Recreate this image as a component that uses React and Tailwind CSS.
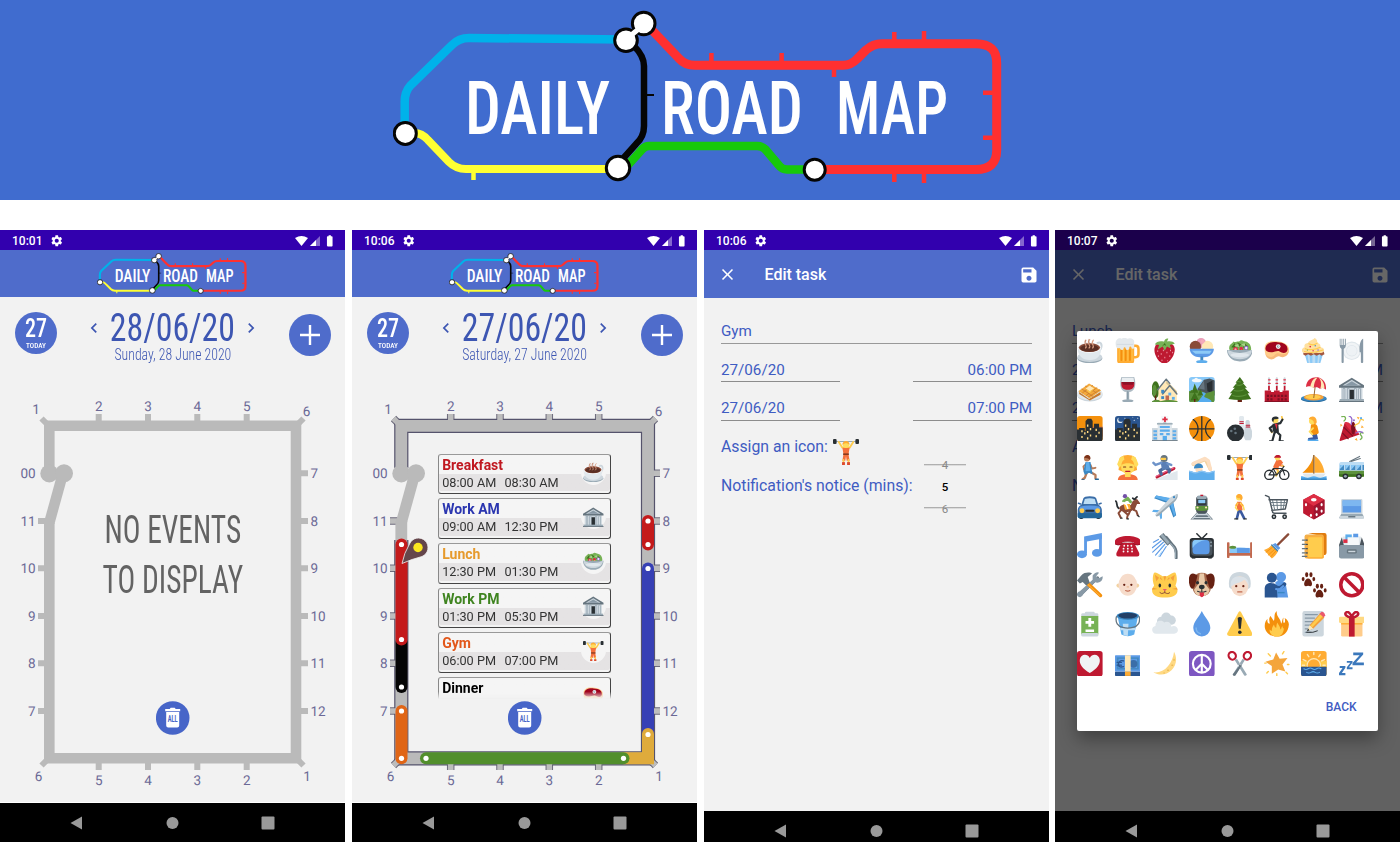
import React, { Fragment } from "react";
import { MdSettings, MdSave, MdClose, MdChevronLeft, MdChevronRight, MdBatteryFull } from "react-icons/md";

/* ---------- drawing helpers (36 x 36 icon box) ---------- */
const g = (...kids) => React.createElement(Fragment, null, ...kids);
const p = (fill, d) => <path fill={fill} d={d} />;
const l = (stroke, width, d) => (
  <path fill="none" stroke={stroke} strokeWidth={width} strokeLinecap="round" strokeLinejoin="round" d={d} />
);
const c = (fill, cx, cy, r) => <circle fill={fill} cx={cx} cy={cy} r={r} />;
const e = (fill, cx, cy, rx, ry) => <ellipse fill={fill} cx={cx} cy={cy} rx={rx} ry={ry} />;
const r = (fill, x, y, width, height, rx = 0) => (
  <rect fill={fill} x={x} y={y} width={width} height={height} rx={rx} />
);

const windows = g(
  p("#ffd983", "M6 20h2v3H6zM10 23h2v3h-2zM6 28h2v3H6zM14 12h2v3h-2zM18 17h2v3h-2zM14 21h2v3h-2zM18 26h2v3h-2zM14 30h2v3h-2zM26 18h2v3h-2zM30 22h2v3h-2zM26 27h2v3h-2z")
);
const skyline = p(
  "#292f33",
  "M0 19h3v-2h8v4h1V7l3-3h5l2 3v10h2v-6h7v5h5v16a4 4 0 0 1-4 4H4a4 4 0 0 1-4-4z"
);

const icons = {
  coffee: g(
    e("#99aab5", 18, 28.5, 17.5, 7), e("#ccd6dd", 18, 27, 17.5, 6.8),
    l("#ccd6dd", 3, "M29 7c6-3 8 6 1 12"),
    p("#e1e8ed", "M1 14c0 10 6 17 17 17s16-7 16-17z"),
    e("#f5f8fa", 17.5, 13.5, 16.5, 7.5), e("#8a4b38", 17.5, 13.5, 15, 6.2), e("#5a2f24", 17.5, 14.5, 13, 5),
    l("#d99e82", 1.7, "M12 14c4-4-4-5 0-11M17 14c4-4-4-5 0-12M22 14c4-4-4-5 1-11"),
    l("#8a4b38", 0.6, "M13 12c4-4-4-5 0-9M18 12c4-4-4-5 0-10")
  ),
  beer: g(
    l("#ffac33", 3.6, "M25 11h4q4 0 4 4v8q0 4-4 4h-4"),
    p("#ffac33", "M3 10h24v22a4 4 0 0 1-4 4H7a4 4 0 0 1-4-4z"),
    l("#f4900c", 2.4, "M9 17v14M15 17v14M21 17v14"), l("#ffcc4d", 1, "M6 15v17M12 15v17M18 15v17M24 15v17"),
    p("#e4e9ed", "M1 9C0 3 5-1 9 1c4-2 7-1 8 0 5-2 10 0 10 4v8c0 3-4 3-4 0-1-2-3-1-3 1 0 4-5 4-5 0-1-2-3-1-3 1-1 3-5 2-5-1-2 1-6 1-6-5z"),
    l("#ccd6dd", 1, "M3 9h22")
  ),
  strawberry: g(
    p("#be1931", "M4 13C6 6 13 6 18 8c6-3 14 0 14 8 0 9-8 20-15 20S1 22 4 13z"),
    p("#77b255", "M17 5c1-4 4-5 6-4l-2 4c5-1 9 0 11 3l-7 2 2 5-6-3-3 6-3-6-7 4 2-6-6-1c2-4 7-5 12-4z"),
    p("#3e721d", "M18 7l2 4-3-1-3 2z"),
    l("#f4abba", 1.2, "M8 18v1M13 22v1M9 25v1M16 17v1M21 20v1M26 17v1M18 27v1M25 25v1M14 31v1M22 32v0M29 20v1")
  ),
  iceCream: g(
    c("#ea9eb9", 17, 7, 7), c("#8a4b38", 9, 12, 8), c("#ffe8b6", 26, 12, 8), c("#f4abba", 19, 5, 3),
    p("#5c9ae6", "M1 15h34c0 7-7 12-14 12h-6C8 27 1 22 1 15z"), p("#8ccaf7", "M4 18h28l-3 4H9z"),
    r("#4289c1", 16, 26, 4, 6), e("#5dadec", 18, 33.5, 8, 2.5)
  ),
  salad: g(
    p("#77b255", "M3 15C3 8 7 9 9 5c3 2 5-1 8 0 4-4 6 0 9 0 5 1 8 5 8 11l-2 4H5z"),
    p("#3e721d", "M6 13l5-6 1 7zM15 6l5 3-5 5zM24 7l6 5-7 2z"), p("#a6d388", "M10 11l6-3 1 5zM20 9l5-2 1 6z"),
    c("#dd2e44", 12, 16, 3.4), c("#f4abba", 12, 16, 1.6), c("#9266cc", 27, 14, 3), c("#eef", 27, 14, 1.7),
    c("#dd2e44", 20, 15, 2.6), p("#ffcc4d", "M17 19l4-3 2 4z"),
    p("#99aab5", "M0 17h36c0 8-6 16-18 16S0 25 0 17z"), p("#ccd6dd", "M1 17q17 8 34 0c0 7-6 13-17 13S1 24 1 17z"),
    e("#e1e8ed", 18, 24, 13, 3)
  ),
  meat: g(
    p("#ffcc8a", "M1 16C0 6 9 3 20 5c10 1 16 6 15 13-1 6-8 8-13 5-4-2-6 6-12 5C3 28 1 22 1 16z"),
    p("#f7b97b", "M2 21c2 6 9 8 13 3s7-1 11-1 8-2 9-6c0 8-7 12-13 9-4-2-7 5-13 4C5 29 2 26 2 21z"),
    p("#a0041e", "M2 15C3 7 10 5 19 6c10 0 15 5 14 11-1 5-7 5-11 2-4-2-8 2-12 1-5 0-8-2-8-5z"),
    c("#f5f8fa", 20, 12, 3.3), c("#8899a6", 20, 12, 1.8), c("#f5f8fa", 20.5, 11.5, 0.8)
  ),
  cupcake: g(
    p("#8ccaf7", "M5 22h26l-4 14H9z"), p("#bdddf4", "M9 23h3l1 13h-2zM16 23h4v13h-4zM24 23h3l-2 13h-2z"),
    p("#a5583f", "M4 19h28l1 4-4 2-3-2-4 2-4-2-4 2-4-2-4 2-3-2z"),
    p("#ffe0a0", "M2 20c-2-5 1-6 3-7-1-5 3-6 5-6 1-4 6-3 9-7 6 3 3 7 3 7 5 0 6 4 5 6 5 0 7 4 4 7-5 3-9-1-14 2-5-3-10 1-15-2z"),
    l("#ffcc4d", 1.5, "M6 15c5 2 14 2 21-2M11 8c4 2 9 2 12-1M5 19c7 2 18 1 26-2"),
    c("#dd2e44", 13, 12, 1.2), c("#3b88c3", 20, 11, 1), c("#77b255", 9, 17, 1), c("#9266cc", 24, 17, 1.1), c("#dd2e44", 17, 18, 1)
  ),
  plate: g(
    c("#dfe6eb", 18, 18, 13), c("#f1f4f6", 18, 18, 11.4), c("#dfe6eb", 18, 18, 8), c("#eef2f5", 18, 18, 7),
    p("#8899a6", "M1 1h1.2v9h1.3V1h1.2v9H6V1h1.2v9h1.2V1h1.2v10q0 3-3 4.5V34q-1.5 3-3 0V15.500Q1 14 1 11z"),
    p("#8899a6", "M34 1v33q-1.600 3-3.200 0V20H29C28 8 31 2 34 1z")
  ),
  waffle: g(
    e("#ccd6dd", 18, 25, 18, 9.500), e("#e1e8ed", 18, 23.500, 18, 9), p("#c77b2e", "M3 21l14 10 16-10v4L18 33 3 24z"),
    p("#f4a93c", "M2 20L17 9l17 10-16 11z"),
    l("#c77b2e", 1.100, "M7 17l15 10M12 13l15 9M28 15L13 26M22 12L8 22M32 18L16 28"), p("#ffe8b6", "M12 16l6-4 6 4-6 4z"), p("#ffcc4d", "M12 17l6 3 6-3-6 6z")
  ),
  wine: g(
    p("#aebbc4", "M9 0h18c4 12 0 21-7 21v11h-4V21C9 21 5 12 9 0z"), p("#e9eef1", "M10 1h16l1 7H9z"),
    p("#be1931", "M9 7h18c1 7-2 11-9 11S8 14 9 7z"), p("#8c1128", "M9 7h18l-2 4H12z"),
    r("#8899a6", 17, 20, 2, 12), e("#99aab5", 18, 33.500, 8, 2.300)
  ),
  house: g(
    e("#3e721d", 5, 18, 5.500, 12), p("#662113", "M4 20h2v14H4z"), e("#5c913b", 3.500, 19, 3, 8),
    p("#ffe8b6", "M9 17L20 5l6 6 9 9v15H9z"), p("#d8c494", "M20 5l15 15v3L20 9z"),
    l("#66757f", 2, "M8 18L20 3l5 6M15 24l10-12 10 12"), r("#3b88c3", 13, 18, 4, 5), r("#5dadec", 23, 22, 4, 4), r("#5dadec", 28, 28, 4, 4),
    r("#3b88c3", 13, 27, 4, 4), r("#c1694f", 19, 26, 5, 9), p("#5c913b", "M0 34q7-4 12 0 12-3 24 0v2H0z")
  ),
  park: g(
    r("#88c9f9", 0, 0, 36, 36, 4), e("#f5f8fa", 11, 5, 7, 2.500), c("#f5f8fa", 10, 3.500, 2.500),
    p("#4b555d", "M12 17L21 4l8-2 7 3v21H12z"), p("#292f33", "M25 9l8-4v18l-7-3z"), p("#66757f", "M14 16l7-11 1 13z"),
    p("#5c913b", "M0 20q12-5 24 3l12-4v13a4 4 0 0 1-4 4H4a4 4 0 0 1-4-4z"),
    p("#55acee", "M17 21c14 1 0 6 6 8 6 2 9 4 9 7H10c6-3 5-6 8-8 2-3-8-4-1-7z"),
    p("#3e721d", "M4 22l4-13 5 13H1l3-4zM12 26l4-9 4 9zM2 33l6-12 6 12z"), r("#662113", 7, 31, 2, 4)
  ),
  tree: g(
    r("#662113", 15, 29, 6, 7, 1), p("#3e721d", "M18 0l6 8h-2l6 7h-3l7 8h-3l5 8q-16 3-32 0l5-8H4l7-8H8l6-7h-2z"),
    l("#5c913b", 1.500, "M13 11q6 2 9-1M10 19q8 2 13-1M8 26q10 3 19-1M14 6l5 1")
  ),
  factory: g(
    p("#be1931", "M1 36V19h9v2h4v-2h8v2h4v-2h9v17z"), r("#7c1022", 1, 34, 34, 2),
    p("#7c1022", "M4 25h3v3H4zM9 25h3v3H9zM14 25h3v3h-3zM19 25h3v3h-3zM24 25h3v3h-3zM29 25h3v3h-3zM4 30h3v3H4zM9 30h3v3H9zM19 30h3v3h-3zM24 30h3v3h-3zM29 30h3v3h-3z"),
    l("#be1931", 2.500, "M7 18v-5M18 18v-5M29 18v-5"), l("#ccd6dd", 3, "M7 11V2M18 11V2M29 11V2"), l("#dd2e44", 2, "M6.500 9h2M17 9h2M28 9h2M6.500 4h2M17 4h2M28 4h2")
  ),
  beach: g(
    e("#269", 18, 31, 18, 4.500), e("#3b88c3", 18, 30, 18, 4.500), e("#f4a03c", 18, 28.500, 14, 4.500), e("#ffcc4d", 17, 28, 11, 3),
    l("#99672e", 1.400, "M21 5l-3 24"), p("#dd2e44", "M7 14C8 2 18-1 26 1c7 3 10 9 9 17-3-3-6-3-8-1-3-3-6-3-9-2-3-2-8-3-11-1z"),
    p("#ffe8b6", "M21 1c-5 2-7 8-8 13l5 1c0-5 2-11 5-14zM25 1c4 4 4 10 2 16 2-2 4-2 6-1 0-7-3-13-8-15z")
  ),
  bank: g(
    r("#ccd6dd", 3, 10, 30, 22), p("#66757f", "M0 12L18 1l18 11v3H0z"), p("#ccd6dd", "M5 12l13-8 13 8z"),
    p("#8899a6", "M8 12l10-6 10 6z"), l("#8899a6", 3.400, "M7 17v14M13 17v14M23 17v14M29 17v14"), l("#e1e8ed", 1.500, "M7 17v14M13 17v14M23 17v14M29 17v14"),
    r("#292f33", 15, 18, 6, 14), r("#99aab5", 1, 31, 34, 2.500), r("#66757f", 0, 33.500, 36, 2.500)
  ),
  sunsetCity: g(r("#f4900c", 0, 0, 36, 36, 4), p("#c1694f", "M22 15h14v14H22z"), skyline, windows),
  nightCity: g(
    r("#2a5590", 0, 0, 36, 36, 4), c("#e1e8ed", 7, 6, 4), c("#2a5590", 8.500, 4.500, 3.700),
    p("#e1e8ed", "M14 2l1 2-2 0zM27 5l1 2-2 0zM32 2l1 2-2 0zM25 1l1 1-2 0z"), skyline, windows
  ),
  hospital: g(
    r("#ccd6dd", 0, 17, 11, 18), r("#ccd6dd", 25, 17, 11, 18), r("#e1e8ed", 8, 9, 20, 26), r("#66757f", 16, 9, 4, 2), r("#f5f8fa", 13, 0, 10, 9),
    p("#dd2e44", "M17 1h2.500v2.500H22V6h-2.500v2.500H17V6h-2.500V3.500H17z"), r("#99aab5", 7, 10, 22, 2),
    p("#5dadec", "M11 14h14v3H11zM11 19h14v3H11zM11 24h5v3h-5zM20 24h5v3h-5zM2 20h5v3H2zM2 25h5v3H2zM2 30h5v3H2zM29 20h5v3h-5zM29 25h5v3h-5zM29 30h5v3h-5z"),
    r("#55acee", 15, 28, 6, 8), r("#66757f", 0, 34, 36, 2)
  ),
  basketball: g(c("#f4900c", 18, 18, 18), l("#292f33", 1.800, "M18 1v34M1 18h34M6 5c9 7 9 19 0 26M30 5c-9 7-9 19 0 26")),
  bowling: g(
    p("#e1e8ed", "M17 2c0-3 7-3 7 0 0 5-1 7 1 12 2 7 0 12-1 12h-6c-2-5-3-8-1-13 1-5 0-7 0-11z"), l("#be1931", 1.500, "M18 8h5M18 10.500h5"),
    p("#ccd6dd", "M26 8c0-3 6-3 6 0 0 4 0 6 2 10 3 6 1 13-1 16h-7c-3-4-3-10-1-15 1-5 1-7 1-11z"), l("#be1931", 1.500, "M27 13h5M27 15.500h5"),
    c("#292f33", 12, 24, 12), c("#66757f", 6, 21, 1.800), c("#66757f", 11, 18, 1.800), c("#66757f", 12, 24, 1.800)
  ),
  dancer: g(
    l("#ffcc4d", 2.500, "M26 5l-1-4M9 19l2 4"), l("#292f33", 3, "M15 12l8-2 3-5M14 13l-6 4 3 5"), p("#292f33", "M12 11h8l1 11-6 3-3-5z"),
    p("#dd2e44", "M15 11l3 8 1-8z"), l("#292f33", 3, "M15 23l-3 11M18 22l5 5-1 8"), l("#292f33", 2, "M11 35H8M23 35h4"),
    c("#ffdc5d", 16, 6, 4.200), p("#292f33", "M11 6c-1-5 6-7 10-3-3 2-6 1-7 2l-1 4z")
  ),
  kneeling: g(
    p("#3b5aa0", "M14 24h8l2 8c-5 3-10 3-14 2v-3l7-1z"), p("#55acee", "M9 33h12c4-1 5 3 1 3H10z"),
    p("#f4900c", "M14 12c4-2 7-1 9 2l2 9c0 4-9 5-12 1z"), l("#ffdc5d", 2.500, "M17 17l-5 5 4 4"), c("#ffdc5d", 16, 7, 4.800), p("#ffac33", "M11 4c3-6 12-4 11 5-1 3-4 3-4 0 0-3-4-4-7-5z")
  ),
  party: g(
    p("#be1931", "M8 9L29 26 2 35q-2 0-1-2z"), p("#dd2e44", "M8 9c6-2 9 4 14 7l7 10c-7-1-18-8-21-17z"), l("#7c1022", 1.500, "M7 16l12 12M5 24l8 8"), e("#7c1022", 20, 17, 3, 9),
    l("#77b255", 1.800, "M4 1c5-2 7 3 3 6M30 33c4-2 2-5 0-7 0-3 2-3 4-2"), l("#9266cc", 1.800, "M14 0c6 2 4 7 3 12M24 24c4-3 7-2 9-1"), l("#ffcc4d", 1.800, "M22 14c2-4 6-1 7-6s4-3 6-2"),
    p("#ffac33", "M25 1l4 1-2 3zM32 13l3 3-4 1zM2 11l3 2-3 2zM22 33l3-2 1 4z"), c("#55acee", 31, 3, 1.500), c("#9266cc", 21, 6, 1.400)
  ),
  running: g(
    l("#b77b59", 2.600, "M14 12l-5 4 1 5M19 14l2 5 5-1"), l("#b77b59", 3.200, "M14 24l-3 8-3 2M19 24l7 4v5"), p("#3b88c3", "M12 10h7l2 12 1 5-5-2-6 3-2-5z"),
    p("#5dadec", "M13 10h4l2 12-7 1z"), c("#b77b59", 14, 5, 4.200), p("#7c331a", "M10 4c2-6 9-5 9 1l-1 2c-2-3-5-2-8-3z"), l("#269", 2, "M7 35h3M26 34h4")
  ),
  massage: g(
    p("#ffac33", "M6 12C4 4 10 0 18 0s14 4 12 12l1 9q-13 7-26 0z"), p("#f4703c", "M4 36c0-7 5-9 14-9s14 2 14 9z"), r("#ffdc5d", 14, 24, 8, 7),
    e("#ffdc5d", 18, 17, 9.500, 10), p("#ffdc5d", "M7 3l5-2 2 9-8 8-3-5zM29 3l-5-2-2 9 8 8 3-5z"), p("#ffac33", "M9 14c1-7 4-8 9-8s8 1 9 8c-4-3-14-3-18 0z"),
    l("#7c331a", 1.500, "M12 17h3M21 17h3"), l("#be1931", 1.600, "M15 23h6")
  ),
  snowboard: g(
    p("#e1e8ed", "M0 36L36 22v12q0 2-2 2z"), l("#be1931", 4, "M7 31L31 19"), l("#ea6490", 1.500, "M6 30L31 18"), l("#4b6a9b", 4.500, "M18 18l-7 4 2 5M19 18l6 3-1 3"),
    p("#5b7fb5", "M12 9l10 1 3 9-11 2z"), l("#6d93c9", 3.500, "M13 11l-8 3-3-3M22 12l5 2"), c("#66757f", 17, 5, 5), r("#ffcc4d", 12, 4, 8, 3, 1.500)
  ),
  swimming: g(
    l("#f3d2a2", 5, "M6 13L23 6l7 14"), l("#fcdec1", 5, "M6 12l16-7 5 3 3 12"), c("#fcdec1", 14, 20, 5), p("#3b88c3", "M7 19c0-8 12-10 13-1z"),
    p("#5dadec", "M0 22c4 0 5 2 9 2s5-2 9-2 5 2 9 2 5-2 9-2v13q0 1-2 1H2q-2 0-2-2z"), p("#8cc4f2", "M0 22c4 0 5 2 9 2s5-2 9-2 5 2 9 2 5-2 9-2v2c-4 0-5 2-9 2s-5-2-9-2-5 2-9 2-5-2-9-2z")
  ),
  weights: g(
    l("#99aab5", 1.500, "M4 3.500h28"), r("#292f33", 0, 0, 5, 7, 1.500), r("#292f33", 31, 0, 5, 7, 1.500), l("#ffcc4d", 2.600, "M8 4l5 8 10 0 5-8"),
    p("#f4703c", "M13 12h10l-1.500 9 1.500 9h-4l-1-6-1 6h-4l1.500-9z"), r("#7c331a", 14, 20, 8, 2), l("#ffcc4d", 2.600, "M14.500 29v2M21.500 29v2"), r("#dd4a2b", 12.500, 32, 4, 4), r("#dd4a2b", 19.500, 32, 4, 4), c("#ffdc5d", 18, 8, 4.500), p("#ffac33", "M13 8c0-7 10-7 10 0-3-3-7-3-10 0z")
  ),
  cycling: g(
    l("#ffcc4d", 3, "M17 18l3 5-3 6"), p("#f4703c", "M13 16L18 6l6 1 3 4-6 5-1 5-6-1z"), l("#f4703c", 3, "M22 9l-1 5 5 1"), c("#ffdc5d", 19, 4, 3.700), p("#be1931", "M14 4c2-6 10-5 10 0z"), l("#ffcc4d", 2, "M25 15l3 1"),
    <circle cx="7.500" cy="28" r="6.500" fill="none" stroke="#292f33" strokeWidth="2" />, <circle cx="28.500" cy="28" r="6.500" fill="none" stroke="#292f33" strokeWidth="2" />, l("#292f33", 1.600, "M7 28l6-9h13l3 9M13 19l5 9 8-9 2-3M7 28h11")
  ),
  sailboat: g(p("#f4900c", "M17 1v24H2C10 18 16 10 17 1z"), p("#ffac33", "M19 1c8 5 13 15 14 24H19z"), r("#99672e", 17, 0, 2, 27), p("#e1e8ed", "M2 26h33l-5 6H6z"), p("#55acee", "M0 30c5 0 6 2 9 2s6-2 9-2 6 2 9 2 6-2 9-2v6H0z"), p("#3b88c3", "M0 33h36v3H0z")),
  trolleybus: g(l("#66757f", 1.500, "M15 9l14-7M17 9l13-4"), p("#bdddf4", "M3 10h31q2 0 2 2v15H0V15q0-5 3-5z"), p("#4289c1", "M2 14h5v7H1zM9 14h6v7H9zM17 14h6v7h-6zM25 14h6v7h-6zM33 14h3v7h-3z"), p("#8ccaf7", "M2 14h5l-6 6zM9 14h6l-6 7zM17 14h6l-6 7zM25 14h6l-6 7z"), p("#5c913b", "M0 22h36v6q0 3-3 3H3q-3 0-3-3z"), r("#3e721d", 0, 27, 36, 3), c("#292f33", 9, 30, 4), c("#99aab5", 9, 30, 2), c("#292f33", 28, 30, 4), c("#99aab5", 28, 30, 2)),
  car: g(r("#292f33", 3, 29, 6, 6, 2), r("#292f33", 27, 29, 6, 6, 2), p("#3b6ea8", "M6 15l3-9q1-3 9-3t9 3l3 9q5 3 5 8v9H1v-9q0-5 5-8z"), p("#bdddf4", "M9 14l2-7q7-2 14 0l2 7z"), p("#5c9ae6", "M4 18q14-4 28 0l1 4H3z"), p("#269", "M1 27h34v5q0 2-2 2H3q-2 0-2-2z"), c("#ffcc4d", 7, 23.500, 3.500), c("#ffcc4d", 29, 23.500, 3.500), r("#292f33", 12, 22, 12, 3, 1), l("#3b6ea8", 2, "M2 13l3 1M34 13l-3 1")),
  horseRacing: g(
    l("#292f33", 2.500, "M5 20c-4-3-1-8-4-10M30 9l-5-3M27 8l4-4"), l("#8a4b38", 2.800, "M9 22l-4 5 3 6M12 24l6 5-1 5M24 21l6 3 2 6M22 22l-3 7"), e("#8a4b38", 16, 20, 10, 5.500), p("#8a4b38", "M20 20l5-10 6-3 5 7-5 0-4 10z"), l("#292f33", 1.600, "M8 34h2M17 35h2M32 30l2 2"),
    p("#ffac33", "M12 14h9l1 7-8 1z"), l("#77b255", 4, "M12 10l6-4 4 5"), c("#7450a8", 14, 3, 3), l("#fff", 2.200, "M11 12l5 3 2 5")
  ),
  airplane: g(
    p("#3b88c3", "M22 13L3 6l3-4 22 5zM23 14l7 19 4-3-5-22z"), p("#5dadec", "M23 11L4 5l2-3 22 4zM25 13l6 18 2-2-4-20zM8 26l-8-1 2-3 10 1zM10 28l2 8 2-2 0-10z"),
    p("#99aab5", "M36 1c1 5-4 10-8 13L9 31q-4 2-4-2l18-19C27 5 31 1 36 0z"), p("#ccd6dd", "M35 1c-5 0-9 3-12 7L6 27q-1 2 0 3L28 11c4-3 7-6 7-10z"), c("#3b88c3", 31, 4.500, 1.600)
  ),
  station: g(
    p("#66757f", "M11 26h14l9 10H2z"), l("#ccd6dd", 1.600, "M12 27L5 35M24 27l7 8M11 29h14M8 33h20"), r("#4b555d", 10, 3, 16, 24, 4), r("#99aab5", 11, 2, 14, 6, 3), r("#292f33", 12, 7, 12, 8, 1), r("#8ccaf7", 13, 8, 10, 5),
    p("#5c913b", "M9 17h18v5q-9 4-18 0z"), c("#ffe8b6", 12, 19, 1.500), c("#ffe8b6", 24, 19, 1.500), r("#be1931", 16, 1, 4, 2)
  ),
  walking: g(l("#3b5aa0", 3.600, "M17 22l-3 12M18 22l3 6 3 6"), p("#f4703c", "M14 11h6l2 12h-8z"), l("#ffdc5d", 2.200, "M15 13l-3 6 3 4M19 13l4 5 1 4"), p("#ffac33", "M15 11l-4 5 3 1zM19 11l5 5-3 1z"), c("#ffdc5d", 17, 5, 4.300), p("#ffac33", "M13 3c2-5 9-4 9 3l-2 4-2-4c-3 0-5-1-5-3z"), l("#292f33", 2, "M11 35h4M24 35h3")),
  cart: g(l("#4b555d", 2, "M2 2l5 2 5 21q0 2 3 2h16M7 8h26l-3 13-19 2"), l("#66757f", 1.300, "M9 12h23M10 16h21M12 9l3 13M18 9l1 13M24 9v12M29 9l-2 12"), c("#292f33", 14, 32, 3.400), c("#ccd6dd", 14, 32, 1.300), c("#292f33", 29, 32, 3.400), c("#ccd6dd", 29, 32, 1.300)),
  die: g(p("#be1931", "M18 0l15 8v19l-15 9-15-9V8z"), p("#dd2e44", "M18 0l15 8-15 9L3 8z"), p("#a0152f", "M18 17l15-9v19l-15 9z"), e("#fff", 18, 8, 4, 2.500), e("#fff", 7, 15, 1.500, 2.200), e("#fff", 14, 30, 1.500, 2.200), e("#fff", 22, 29, 1.500, 2.200), e("#fff", 29, 24, 1.500, 2.200), e("#fff", 22, 21, 1.500, 2.200), e("#fff", 29, 15, 1.500, 2.200)),
  laptop: g(r("#ccd6dd", 3, 7, 30, 22, 2), r("#5c9ae6", 5, 9, 26, 17), r("#7db7f0", 5, 9, 26, 8), p("#99aab5", "M3 28h30l3 6H0z"), p("#ccd6dd", "M1 31h34v3q0 1-2 1H3q-2 0-2-1z"), r("#66757f", 13, 31, 10, 2)),
  music: g(p("#5c9ae6", "M10 5L35 0v8L14 12v17h-4z"), p("#5c9ae6", "M31 3h4v25h-4z"), e("#5c9ae6", 7, 30, 7, 5.500), e("#5c9ae6", 28, 28, 7, 5.500)),
  phone: g(p("#be1931", "M9 14h18l7 14q1 5-3 5H5q-4 0-3-5z"), p("#be1931", "M0 11C2 2 34 2 36 11v4q0 2-3 2h-4q-3 0-3-4-8-2-16 0 0 4-3 4H3q-3 0-3-2z"), l("#8c1128", 1, "M1 16q3 2 8 0 1-3 3-3 6-1 12 0 2 0 3 3 5 2 8 0"), l("#f5f8fa", 2.600, "M13 18h0M18 18h0M23 18h0M12 22h0M18 22h0M24 22h0M12 26h0M18 26h0M24 26h0")),
  shower: g(l("#66757f", 4, "M20 6l10 12q4 4 4 10v7"), l("#99aab5", 1.500, "M19 6l10 12q4 4 4 10v7"), p("#66757f", "M10 5l6-5 11 13-5 5z"), p("#99aab5", "M12 4l3-3 10 12-3 3z"), l("#5c9ae6", 1.600, "M13 11L0 21M16 13L1 27M18 16L5 31M20 19L11 33M9 9L2 13"), l("#88c9f9", 1, "M15 18l-3 4M14 26l-5 7")),
  tv: g(l("#292f33", 2, "M11 1l7 7 7-7"), r("#292f33", 1, 7, 34, 28, 4), r("#4b555d", 3, 9, 30, 23, 5), r("#5c9ae6", 5, 10, 24, 20, 5), p("#88c9f9", "M9 10h14q-12 2-18 11v-6q0-5 4-5z"), c("#99aab5", 31, 13, 1.200), c("#99aab5", 31, 18, 1.200), r("#292f33", 4, 34, 5, 2), r("#292f33", 27, 34, 5, 2)),
  bed: g(r("#c1694f", 0, 13, 3.500, 22, 1), r("#c1694f", 32.500, 13, 3.500, 22, 1), r("#c1694f", 2, 28, 32, 4), p("#88c9f9", "M4 22q14-3 28 0v6H4z"), r("#5c9ae6", 14, 21, 18, 7), e("#5c913b", 8, 20, 5, 2.200)),
  broom: g(l("#8a4b38", 3.200, "M34 2L18 18"), p("#5c9ae6", "M16 14l7 7-3 3-8-8z"), p("#ffac33", "M11 16l9 9c-2 5-6 9-9 11L0 24c5-2 8-4 11-8z"), l("#f4900c", 1.300, "M12 20L3 27M15 23L6 31M17 25l-7 8"), l("#3b88c3", 2, "M11 17l8 8")),
  notebook: g(p("#e07c0f", "M10 0h23q3 0 3 3v24q0 4-4 4l-1-26z"), r("#f4b04a", 5, 2, 27, 34, 3), r("#ffac33", 9, 5, 23, 31, 2), r("#ffcc4d", 10, 6, 20, 28, 1), l("#66757f", 1.800, "M2 10h6M2 16h6M2 22h6M2 28h6M2 33h6"), c("#292f33", 8.500, 10, 1), c("#292f33", 8.500, 16, 1), c("#292f33", 8.500, 22, 1), c("#292f33", 8.500, 28, 1)),
  cardBox: g(r("#e1e8ed", 5, 5, 26, 18, 1), p("#5dadec", "M9 2h9v8H9z"), p("#dd2e44", "M6 9h9v5H6z"), p("#5c9ae6", "M20 1h7v6h-7z"), r("#f5f8fa", 12, 6, 16, 11), p("#4b555d", "M0 17l4-11 3 12h22l3-12 4 11v3H0z"), r("#8899a6", 0, 17, 36, 19, 3), r("#66757f", 11, 23, 14, 6, 2), r("#ccd6dd", 13, 25, 10, 2)),
  tools: g(l("#66757f", 4, "M29 8L6 31"), p("#8899a6", "M22 5c4-6 8-5 9-4l-4 5 3 3 6-3c1 7-6 11-11 8L9 31q-3 7-8 3c-3-3 1-7 3-7L22 11z"), l("#f4900c", 5, "M16 17l17 16"), l("#ffac33", 1.500, "M15 17l17 16"), p("#66757f", "M0 12l6-7C11-1 20 1 21 2l-6 5 3 8-5 4-5-5-4 2z")),
  baby: g(c("#f3d2a2", 5, 19, 3), c("#f3d2a2", 31, 19, 3), e("#f6dccb", 18, 18, 13, 15.500), c("#662113", 13, 18, 1.600), c("#662113", 23, 18, 1.600), l("#c1694f", 1.600, "M15 26q3 2 6 0"), l("#e9b894", 1.600, "M17 21h2")),
  cat: g(p("#ffcc4d", "M3 19C0 12 1 4 3 1q2-2 12 5h6Q31-1 33 1c2 4 3 11 0 18 8 11-2 17-15 17S-5 30 3 19z"), p("#f4a03c", "M4 4l6 4-4 5zM32 4l-6 4 4 5zM16 6h4l-2 7zM12 7l3 5-4-3zM24 7l-3 5 4-3zM1 22l7 2-8 1zM35 22l-7 2 8 1z"), e("#292f33", 11, 19, 1.800, 2.700), e("#292f33", 25, 19, 1.800, 2.700), p("#ea596e", "M15 24h6l-3 3z"), l("#8a4b38", 1.300, "M18 27v2q-5 3-7 0M18 29q5 3 7 0")),
  dog: g(p("#a5674a", "M8 8Q9 1 18 1t10 7l3 14q-1 11-13 12Q6 33 5 22z"), p("#e8c9a8", "M15 2h6l2 15 6 8q-2 9-11 9T7 25l6-8z"), p("#662113", "M9 3Q2 0 0 8q-1 10 3 15 3 2 5-3 2-6 4-15zM27 3q7-3 9 5 1 10-3 15-3 2-5-3-2-6-4-15z"), c("#292f33", 12, 15, 2.200), c("#292f33", 24, 15, 2.200), e("#292f33", 18, 21, 4, 3), l("#292f33", 1.500, "M18 23v4M12 27q6 3 12 0"), p("#dd2e44", "M15 29h6v4q-3 5-6 0z")),
  elder: g(p("#ccd6dd", "M3 21C1 7 7 0 18 0s17 7 15 21c-3 6-27 6-30 0z"), e("#f6dccb", 18, 20, 12, 14), p("#dbe2e8", "M5 20C5 7 12 5 23 7c6 2 8 7 8 13-3-5-4-8-7-9-5 5-13 4-17 9z"), c("#662113", 13, 20, 1.600), c("#662113", 23, 20, 1.600), l("#c1694f", 1.600, "M15 28h6")),
  hug: g(p("#5c9ae6", "M16 14c6-3 14-2 15 5l3 17H17z"), c("#5c9ae6", 24, 7, 7), c("#2a5590", 11, 8, 7), p("#2a5590", "M1 36V23c0-9 13-10 17-3l1 16z"), l("#2a5590", 5, "M14 19q8 7 15-2"), l("#5c9ae6", 3, "M27 20q-5 6-10 4"), r("#3b88c3", 19, 28, 10, 2)),
  paws: g(
    p("#662113", "M10 9c5 0 8 11 3 11-2-1-4-1-6 0-5 0-2-11 3-11z"), e("#662113", 3, 10, 2, 3), e("#662113", 8, 4, 2.200, 3.500), e("#662113", 14, 4, 2.200, 3.500), e("#662113", 18, 10, 2, 3),
    p("#662113", "M26 25c5 0 8 11 3 11-2-1-4-1-6 0-5 0-2-11 3-11z"), e("#662113", 19, 26, 2, 3), e("#662113", 23, 20, 2.200, 3.500), e("#662113", 29, 20, 2.200, 3.500), e("#662113", 34, 26, 2, 3)
  ),
  forbidden: g(<circle cx="18" cy="18" r="15.500" fill="none" stroke="#be1931" strokeWidth="5" />, l("#be1931", 5, "M8 8l20 20")),
  battery: g(r("#ccd6dd", 11, 1, 14, 5, 2), r("#ccd6dd", 6, 3, 24, 6, 2), r("#77b255", 6, 7, 24, 26), r("#ccd6dd", 6, 31, 24, 5, 2), p("#fff", "M16 10h4v4h4v4h-4v4h-4v-4h-4v-4h4zM12 26h12v3.500H12z")),
  bucket: g(p("#5dadec", "M4 9h28l-5 24q-9 5-18 0z"), p("#bdddf4", "M11 18h8l-1 17-6-1zM7 24h22l-1 3H8z"), e("#3b88c3", 18, 7, 16, 5.500), e("#223f66", 18, 6.500, 13.500, 4), l("#66757f", 1.800, "M2 8c-2 8 2 14 9 15q7 2 14 0c7-1 11-7 9-15")),
  cloud: g(c("#ccd6dd", 20, 9, 7), c("#ccd6dd", 27, 13, 6.500), c("#ccd6dd", 13, 14, 6), p("#e1e8ed", "M6 32C-1 32-2 22 5 21c-1-8 10-9 12-5 6-3 11 2 10 6 6-3 11 2 9 7-1 2-3 3-5 3z")),
  drop: g(p("#5c9ae6", "M18 0c4 9 12 15 12 24a12 12 0 0 1-24 0C6 15 14 9 18 0z"), l("#7db7f0", 2, "M10 24q0 6 6 8")),
  warning: g(p("#ffcc4d", "M16 2q2-3 4 0l16 30q0 3-3 3H3q-3 0-3-3z"), p("#292f33", "M15 10q3-3 6 0l-1.500 15h-3z"), c("#292f33", 18, 30, 2.500)),
  fire: g(p("#f4900c", "M35 19c-1 12-8 17-17 17S1 30 1 21c0-5 2-8 4-10-1 5 1 7 3 7 0-5-2-6 1-11 2 2 3 5 5 7 2-7-1-9 4-14-1 9 6 10 6 18 2-3 1-5 3-9 1 3-1 6 1 8 2-1 2-4 1-7 4 2 6 6 6 9z"), p("#ffcc4d", "M28 25c-1 8-5 11-10 11S7 32 8 26c1 1 2 2 3 2 0-3 0-5 3-9 1 4 2 4 3 5 1-3 0-5 2-8 1 4 4 5 4 10 2-1 1-3 3-5 0 2 1 3 2 4z")),
  memo: g(r("#ccd6dd", 2, 0, 30, 36, 3), l("#8899a6", 1.700, "M6 5h17M6 10h13M6 15h14M6 20h12M6 25h9M6 30h8"), p("#f4a03c", "M12 20L27 3l6 6-16 16z"), p("#ffcc4d", "M13 21L28 4l3 3-15 16z"), p("#ea596e", "M26 4l3-3q4 0 5 5l-2 3z"), p("#ffe8b6", "M12 20l5 5-8 3z"), p("#292f33", "M10 25l2 2-4 2z"), l("#292f33", 1.300, "M8 30q10 1 15-2")),
  gift: g(r("#ffcc8a", 3, 14, 30, 22, 2), r("#ffd983", 0, 8, 36, 9, 2), p("#ffac33", "M3 17h30v2H3z"), r("#be1931", 14, 9, 8, 27), l("#be1931", 3.500, "M18 9C10 9 7 4 10 2s7 2 8 7c8 0 11-5 8-7s-7 2-8 7")),
  heart: g(r("#be1931", 0, 0, 36, 36, 4), p("#f0f3f5", "M18 31C8 25 3 19 4 12 5 4 15 3 18 10c3-7 13-6 14 2 1 7-4 13-14 19z")),
  money: g(r("#2a5590", 0, 29, 36, 6, 1), r("#5c9ae6", 0, 6, 36, 23, 1), r("#4289c1", 2.500, 9, 31, 17), r("#5c9ae6", 5, 11, 26, 13), c("#3b6ea8", 26, 18, 5.500), l("#2a5590", 1.800, "M12 14q-6-2-7 4t7 4M3 16h6M3 20h6"), r("#ffe8b6", 14, 6, 8, 23), r("#ffac33", 14, 29, 8, 6)),
  moon: g(p("#ffd983", "M31 1c11 21-12 40-29 29 15 2 27-12 29-29z"), l("#ecbb57", 2, "M28 20h1M22 27h1M31 12v1M17 31h0")),
  peace: g(r("#7e57c2", 0, 0, 36, 36, 4), <circle cx="18" cy="18" r="12.500" fill="none" stroke="#fff" strokeWidth="3" />, <path d="M18 6v24M18 18l-9 9M18 18l9 9" fill="none" stroke="#fff" strokeWidth="3" />),
  scissors: g(p("#99aab5", "M11 13l3-2 14 22q-2 3-4 1zM25 13l-3-2L8 33q2 3 4 1z"), p("#66757f", "M18 20l3 0-9 14q-3 2-4-1z"), <ellipse cx="7.500" cy="6.500" rx="5" ry="5.500" fill="none" stroke="#be1931" strokeWidth="3" transform="rotate(-25 8 7)" />, <ellipse cx="28.500" cy="6.500" rx="5" ry="5.500" fill="none" stroke="#be1931" strokeWidth="3" transform="rotate(25 28 7)" />, c("#66757f", 18, 20, 1.300)),
  star: g(p("#f4a53c", "M17 2l5 9 11-1-7 9 4 10-10-3-9 6v-11l-9-6 11-3z"), l("#ffcc4d", 2, "M6 4l3 3M26 4l2-3M33 19h2M18 32v3M1 17h2M31 30l2 2M6 29l-2 2")),
  sunrise: g(r("#ffac33", 0, 0, 36, 36, 4), r("#ffcc4d", 0, 14, 36, 10), l("#ffe8b6", 2, "M18 2v3M9 5l2 3M27 5l-2 3M3 12l4 2M33 12l-4 2M2 20h3M31 20h3"), c("#ffe8b6", 18, 20, 10), c("#ffac33", 18, 20, 8.500), p("#2a5590", "M0 22h36v10a4 4 0 0 1-4 4H4a4 4 0 0 1-4-4z"), l("#5dadec", 1.500, "M4 25q3 2 6 0t6 0 6 0 6 0M8 30q3 2 6 0t6 0 6 0")),
  sleep: g(<path d="M20 2h14v3L24 16h11v4H19v-3L29 6h-9zM11 14h8v2l-5 7h5v2.500h-8V23l5-6.500h-5zM1 21h8v2.500L4 31h5v3H0v-3l5-7H1z" fill="#3b78bc" />),
};

const Emoji = ({ name, className }) => (
  <svg viewBox="0 0 36 36" className={className} role="img" aria-label={name}>
    {icons[name]}
  </svg>
);

/* ---------- brand ---------- */
function Logo({ className }) {
  const stop = (cx, cy, rad) => <circle cx={cx} cy={cy} r={rad} fill="#fff" stroke="#050505" strokeWidth="3" />;
  return (
    <svg viewBox="393 10 610 173" preserveAspectRatio="none" className={className} fill="none">
      <path stroke="#00b2ea" strokeWidth="8.500" d="M404.700 133V102Q404.700 92 410 86L452 45Q459 38 469 38L626 39.500" />
      <path stroke="#ffff33" strokeWidth="8" d="M414 133Q422 133 428 140L449 162Q456 169 466 169H610" />
      <path stroke="#ffff33" strokeWidth="4.500" d="M473.500 169v11" />
      <path stroke="#050505" strokeWidth="6.500" d="M634 46Q644 56 644 66V126Q644 137 636 144L620 162" />
      <path stroke="#050505" strokeWidth="2" d="M644 95h10" />
      <path stroke="#17c90a" strokeWidth="8.500" d="M628 165L642 149.500Q645 146 649 146H757Q762 146 765 149L779 165.500Q782 169.500 787 169.500H806" />
      <path stroke="#ff3030" strokeWidth="9" d="M650 28L679 58.500Q685 65.300 695 65.300H843Q851 65.300 857 59L866 50Q873 43.700 882 43.700H976Q996.700 43.700 996.700 63V150Q996.700 169.500 976 169.500H820" />
      <path stroke="#ff3030" strokeWidth="4.500" d="M711.400 53v9M781.600 53v9M834 68v9M894.300 32v8M924 31v9M983 92.700h10M983 137.700h10M894.300 173v9M924 173v10" />
      {stop(643.700, 23.500, 11.300)}
      {stop(626, 40.300, 11.300)}
      <path stroke="#fff" strokeWidth="5" d="M629 37L641 27" />
      {stop(405.300, 133.400, 11)}
      {stop(618, 168, 11.700)}
      {stop(814.700, 169.700, 10.500)}
      <g fill="#fff" fontFamily="Roboto, sans-serif" fontWeight="540" fontSize="75" className="font-stretch-condensed">
        <text x="465" y="134" textLength="145" lengthAdjust="spacingAndGlyphs">DAILY</text>
        <text x="661" y="134" textLength="142" lengthAdjust="spacingAndGlyphs">ROAD</text>
        <text x="836" y="134" textLength="112" lengthAdjust="spacingAndGlyphs">MAP</text>
      </g>
    </svg>
  );
}

/* ---------- phone chrome ---------- */
function StatusBar({ time, dark }) {
  return (
    <div className={`flex h-[20px] shrink-0 items-center pl-[12px] pr-[9px] pt-px text-white ${dark ? "bg-[#1b004b]" : "bg-[#3200ae]"}`}>
      <span className="w-[38px] text-[12px] font-medium leading-none tracking-[0px]">{time}</span>
      <MdSettings className="size-[13.500px]" />
      <svg viewBox="0 0 28 12" className="ml-auto h-[12px] w-[28px]">
        <path d="M0 3Q6.500-1 13 3L6.500 11z" fill="#fff" />
        <path d="M25 1v10H15z" fill="#fff" opacity="0.400" />
        <path d="M21 5v6h-6z" fill="#fff" />
      </svg>
      <MdBatteryFull className="size-[13.500px]" />
    </div>
  );
}

function NavBar({ className }) {
  return (
    <div className={`flex shrink-0 justify-between overflow-hidden bg-black px-[70px] pt-[13px] ${className}`}>
      <svg viewBox="0 0 13 14" className="h-[14px] w-[13px]"><path d="M0.500 7L12 0.500v13z" fill="#999" /></svg>
      <svg viewBox="0 0 14 14" className="size-[14px]"><circle cx="7.500" cy="7" r="6" fill="#999" /></svg>
      <svg viewBox="0 0 14 14" className="size-[14px]"><rect x="0.500" y="0.500" width="13" height="13" rx="1" fill="#999" /></svg>
    </div>
  );
}

/* ---------- 24h map ---------- */
const X = [98.700, 148, 197.300, 246.700];
const Y = [473.300, 521, 568.300, 616, 663.300, 711];

function Ticks({ width }) {
  return (
    <path
      fill="none"
      strokeWidth={width}
      d={
        X.map((x) => `M${x} 414v8M${x} 762v8`).join("") +
        Y.map((y) => `M300 ${y}h8`).join("") +
        Y.slice(1).map((y) => `M38 ${y}h8`).join("") +
        "M41.500 418.500L46 423M303.500 418.500L299 423M41.500 765.500L46 761M303.500 765.500L299 761"
      }
    />
  );
}

function Labels() {
  return (
    <g fill="#6b6996" fontFamily="Roboto, sans-serif" fontSize="13.500" textRendering="geometricPrecision">
      <g textAnchor="middle">
        <text x="36" y="413.500">1</text>
        <text x="306.500" y="416">6</text>
        <text x="38.500" y="780.500">6</text>
        <text x="307" y="780.500">1</text>
        {X.map((x, i) => <text key={x} x={x} y="411.300">{i + 2}</text>)}
        {X.map((x, i) => <text key={x} x={x} y="785.300">{5 - i}</text>)}
      </g>
      {Y.map((y, i) => <text key={y} x="310.500" y={y + 4.800}>{i + 7}</text>)}
      <g textAnchor="end">
        {Y.map((y, i) => <text key={y} x="35.700" y={y + 4.800}>{["00", 11, 10, 9, 8, 7][i]}</text>)}
      </g>
    </g>
  );
}

const TRACK = "M49.300 473V425.800H296V758.300H49.300V521";

function EmptyMap() {
  return (
    <svg viewBox="0 390 345 405" className="col-start-1 row-start-1 h-[405px] w-[345px]">
      <g stroke="#bababa" fill="none">
        <Ticks width="6" />
        <path d={TRACK} strokeWidth="10.600" />
        <path d="M62.500 475L49.800 521" strokeWidth="10.600" />
      </g>
      <circle cx="49.300" cy="473.500" r="9" fill="#bababa" />
      <circle cx="64" cy="473.300" r="9" fill="#bababa" />
      <path d="M44 519h10.600v5H44z" fill="#bababa" />
      <Labels />
    </svg>
  );
}

function BusyMap() {
  const leg = (color, d) => <path d={d} stroke={color} strokeWidth="12" strokeLinecap="round" strokeLinejoin="miter" fill="none" />;
  return (
    <svg viewBox="0 390 345 405" className="col-start-1 row-start-1 h-[405px] w-[345px]">
      <g stroke="#6d6b7c"><Ticks width="7.500" /></g>
      <path d="M49.300 468V425.800H296V758.300H49.300V540" stroke="#55536c" strokeWidth="14.200" fill="none" />
      <g stroke="#bdbdbd"><Ticks width="5.500" /></g>
      <g stroke="#bababa" fill="none">
        <path d={TRACK} strokeWidth="11.800" />
        <path d="M62.500 475L49.800 521" strokeWidth="11" />
      </g>
      <circle cx="49.300" cy="473.500" r="9" fill="#bababa" />
      <circle cx="64" cy="473.300" r="9" fill="#bababa" />
      <path d="M44 519h10.800v5H44z" fill="#bababa" />
      {leg("#c41a1b", "M296 521V544.500")}
      {leg("#3740b5", "M296 568.500V734")}
      {leg("#dfab3c", "M296 734V758.300H271.500")}
      {leg("#528f2c", "M271.500 758.300H74")}
      {leg("#e06516", "M49.500 758.300V711")}
      {leg("#050505", "M49.500 687V642")}
      {leg("#c41a1b", "M49.500 639.500V544.500")}
      <g fill="#fff">
        {[[296, 521], [296, 544.500], [296, 568.500], [296, 734.500], [271.500, 758.300], [74, 758.300], [49.500, 758.300], [49.500, 711], [49.500, 687], [49.500, 639.500], [49.500, 544.500]].map(([x, y]) => (
          <circle key={`${x}-${y}`} cx={x} cy={y} r="2.600" />
        ))}
      </g>
      <path d="M50 563.500Q52 553 57.500 544A9.600 9.600 0 1 1 70 556.500Q60 559 50 563.500z" fill="#65464b" stroke="#f2f2f2" strokeWidth="0.800" />
      <circle cx="66" cy="547.500" r="4.700" fill="#fbe620" />
      <Labels />
    </svg>
  );
}

function DayHeader({ date, day }) {
  return (
    <div className="flex h-[93px] shrink-0 items-start justify-between px-[14.500px] pt-[15px] font-stretch-condensed">
      <div className="flex size-[42px] flex-col items-center rounded-full bg-[#4f6ccb] text-white">
        <span className="scale-x-[0.850] pt-[4px] text-[26px] font-medium leading-[25px]">27</span>
        <span className="scale-x-[0.900] text-[8px] font-medium leading-[9px]">TODAY</span>
      </div>
      <div className="flex flex-col items-center text-[#3d56b2]">
        <div className="flex h-[32px] items-center justify-center">
          <MdChevronLeft className="size-[20px]" />
          <span className="flex w-[137px] justify-center">
            <span className="scale-x-[0.890] whitespace-nowrap text-[38px] leading-[32px] [font-weight:450]">{date}</span>
          </span>
          <MdChevronRight className="size-[20px]" />
        </div>
        <span className="scale-x-[0.860] whitespace-nowrap text-[16px] font-light leading-[22px]">{day}</span>
      </div>
      <div className="mt-[2px] flex size-[42px] items-center justify-center rounded-full bg-[#4f6ccb]">
        <svg viewBox="0 0 20 20" className="size-[20px]"><path d="M10 0v20M0 10h20" stroke="#fff" strokeWidth="2.400" /></svg>
      </div>
    </div>
  );
}

const ClearAll = ({ className }) => (
  <svg viewBox="0 0 34 34" className={`size-[34px] shrink-0 ${className}`}>
    <circle cx="16.700" cy="17" r="16.800" fill="#4765c8" />
    <path d="M9.200 8h4.500l1-1.200h4l1 1.200h4.500v2.300h-15zM10.200 11h13v13.500q0 2-2 2h-9q-2 0-2-2z" fill="#fff" />
    <text x="16.700" y="20.800" textAnchor="middle" fontSize="8.500" fontWeight="700" textLength="10" lengthAdjust="spacingAndGlyphs" fontFamily="Roboto, sans-serif" fill="#4765c8">ALL</text>
  </svg>
);

const events = [
  { name: "Breakfast", from: "08:00 AM", to: "08:30 AM", icon: "coffee", color: "text-[#c01820]" },
  { name: "Work AM", from: "09:00 AM", to: "12:30 PM", icon: "bank", color: "text-[#2b36b0]" },
  { name: "Lunch", from: "12:30 PM", to: "01:30 PM", icon: "salad", color: "text-[#e69a2c]" },
  { name: "Work PM", from: "01:30 PM", to: "05:30 PM", icon: "bank", color: "text-[#3f8420]" },
  { name: "Gym", from: "06:00 PM", to: "07:00 PM", icon: "weights", color: "text-[#e2571a]" },
  { name: "Dinner", icon: "meat", color: "text-black" },
];

function EventCard({ event }) {
  return (
    <div className="flex h-[40.600px] shrink-0 items-start justify-between rounded-[3px] border border-b-[#444] border-l-[#888] border-r-[#444] border-t-[#999] bg-linear-to-b from-[#f5f5f5] from-50% to-[#e5e3e4] to-50% pl-[3px] pr-[4px] shadow-[inset_0_-2px_0_#f4f4f4]">
      <div className="flex flex-col">
        <span className={`pt-px text-[14px] font-bold leading-[18px] ${event.color}`}>{event.name}</span>
        {event.from && (
          <span className="flex text-[12.700px] leading-[18px] text-[#333]">
            <span className="w-[62.300px]">{event.from}</span>
            <span>{event.to}</span>
          </span>
        )}
      </div>
      <span className="mt-[5px] flex size-[25px] items-center justify-center rounded-full bg-[#f5f5f5]">
        <Emoji name={event.icon} className="size-[20.500px]" />
      </span>
    </div>
  );
}

function DayScreen({ time, date, day, children }) {
  return (
    <section className="flex h-[612px] w-[345px] flex-col bg-[#f2f2f2]">
      <StatusBar time={time} />
      <div className="flex h-[47px] shrink-0 items-start justify-center bg-[#4f6ccb] pr-[2px] pt-[2.500px]">
        <Logo className="h-[41px] w-[150px]" />
      </div>
      <DayHeader date={date} day={day} />
      <div className="grid flex-1 overflow-hidden border-b border-white">{children}</div>
      <NavBar className="h-[39px]" />
    </section>
  );
}

/* ---------- edit task ---------- */
function TaskForm({ name }) {
  return (
    <div className="flex flex-col pl-[17px] pr-[17px] pt-[20px] text-[15.200px] text-[#3f5cc2]">
      <div className="h-[25.500px] border-b-[1.500px] border-[#999] leading-[27px]">{name}</div>
      {["06:00 PM", "07:00 PM"].map((t) => (
        <div key={t} className="mt-[13px] flex h-[25.500px] justify-between leading-[27px]">
          <div className="w-[119px] border-b border-[#8d8d8d]">27/06/20</div>
          <div className="w-[119px] border-b border-[#8d8d8d] text-right">{t}</div>
        </div>
      ))}
      <div className="flex">
        <div className="flex w-[203px] flex-col whitespace-nowrap text-[15.800px]">
          <div className="mt-[16.500px] flex h-[30px] items-start">
            <span className="w-[110px] leading-[20px]">Assign an icon:</span>
            <Emoji name="weights" className="ml-[2px] mt-[2px] size-[26px]" />
          </div>
          <div className="mt-[8.500px] leading-[20px]">Notification's notice (mins):</div>
        </div>
        <div className="mt-[37px] grid w-[42px] justify-items-center text-[11.500px] leading-[14px]">
          <div className="flex w-full justify-center bg-linear-to-b from-transparent from-[6px] via-[#999] via-[6px] to-transparent to-[8px] text-[#888]">4</div>
          <div className="my-[8px] font-medium text-black">5</div>
          <div className="flex w-full justify-center bg-linear-to-b from-transparent from-[5px] via-[#999] via-[5px] to-transparent to-[7px] text-[#888]">6</div>
        </div>
      </div>
    </div>
  );
}

const picker = Object.keys(icons);

function EditScreen({ time, name, dialog }) {
  return (
    <section className="flex h-[612px] w-[345px] flex-col bg-[#f2f2f2]">
      <StatusBar time={time} dark={dialog} />
      <div className="relative flex flex-1 flex-col overflow-hidden">
        <div className="flex h-[48px] shrink-0 items-center bg-[#4f6ccb] pl-[14px] pr-[10px] pt-[1.500px] text-white">
          <MdClose className="size-[19px]" />
          <span className="ml-[27.500px] text-[16px] font-medium">Edit task</span>
          <MdSave className="ml-auto size-[20px]" />
        </div>
        <TaskForm name={name} />
        {dialog && (
          <div className="absolute inset-0 bg-black/60 pl-[22.300px] pt-[81px]">
            <div className="flex h-[399.500px] w-[300.700px] flex-col rounded-[2px] bg-white pt-[6.500px] shadow-[0_8px_18px_rgba(0,0,0,0.350)]">
              <div className="grid auto-rows-[39.130px] grid-cols-[repeat(8,37.370px)]">
                {picker.map((n) => (
                  <Emoji key={n} name={n} className="size-[25.600px]" />
                ))}
              </div>
              <span className="pl-[248.500px] pt-[7.500px] text-[12px] font-medium leading-[20px] text-[#3f5cc2]">BACK</span>
            </div>
          </div>
        )}
      </div>
      <NavBar className="h-[31px]" />
    </section>
  );
}

export default function App() {
  return (
    <div className="h-[842px] w-[1400px] overflow-hidden bg-white font-['Roboto',sans-serif]">
      <header className="flex h-[200px] items-start justify-center bg-[#406ccf] pt-[10px]">
        <Logo className="mr-[4px] h-[173px] w-[610px]" />
      </header>
      <main className="flex gap-[7px] pt-[30px]">
        <DayScreen time="10:01" date="28/06/20" day="Sunday, 28 June 2020">
          <EmptyMap />
          <div className="col-start-1 row-start-1 flex flex-col items-center">
            <p className="mt-[115px] scale-x-[0.765] text-center text-[38.500px] leading-[49.500px] text-[#636363] font-stretch-condensed [font-weight:450]">
              NO EVENTS
              <br />
              TO DISPLAY
            </p>
            <ClearAll className="mt-[96.500px]" />
          </div>
        </DayScreen>
        <DayScreen time="10:06" date="27/06/20" day="Saturday, 27 June 2020">
          <BusyMap />
          <div className="col-start-1 row-start-1 flex flex-col items-center">
            <div className="mt-[63.700px] flex h-[245px] w-[172.700px] flex-col gap-[4.070px] overflow-hidden mask-b-from-97% mask-b-to-100%">
              {events.map((ev) => <EventCard key={ev.name} event={ev} />)}
            </div>
            <ClearAll className="mt-[2px]" />
          </div>
        </DayScreen>
        <EditScreen time="10:06" name="Gym" />
        <div className="-ml-px">
          <EditScreen time="10:07" name="Lunch" dialog />
        </div>
      </main>
    </div>
  );
}
